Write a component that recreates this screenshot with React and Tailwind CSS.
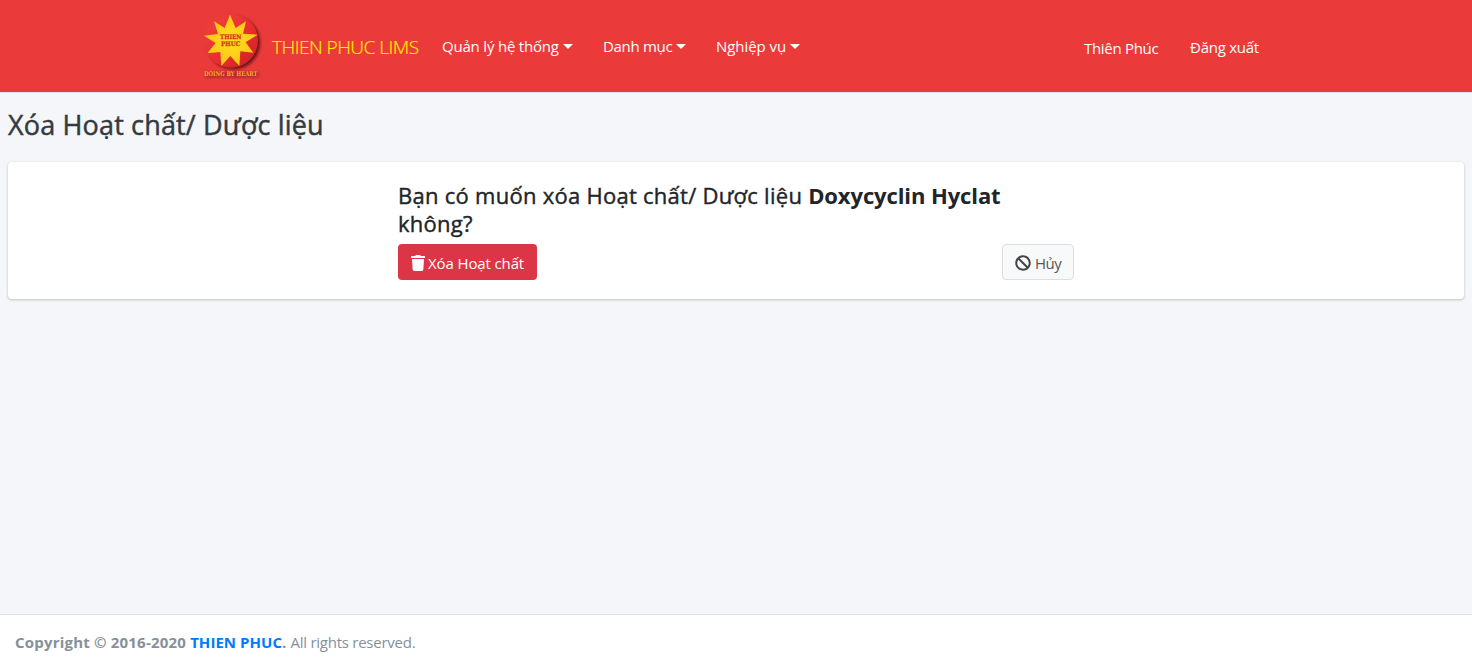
import React from "react";
import { FaTrash, FaBan } from "react-icons/fa";

const starPoints =
  "120,44 137,84 168,64 159,101 203,104 167,127 190,158 151,154 148,198 121,168 94,198 91,156 52,160 77,129 42,107 84,102 72,64 104,84";

function Logo() {
  return (
    <svg className="h-[92px] w-[90px] shrink-0" viewBox="0 0 270 276">
      <defs>
        <linearGradient id="disc" x1="0" y1="0" x2="1" y2="1">
          <stop offset="0.1" stopColor="#ee403d" />
          <stop offset="0.6" stopColor="#e62d2e" />
          <stop offset="1" stopColor="#c81e22" />
        </linearGradient>
        <radialGradient id="star">
          <stop offset="0" stopColor="#ffe01a" />
          <stop offset="1" stopColor="#fcc419" />
        </radialGradient>
        <filter id="soft" x="-20%" y="-20%" width="140%" height="140%">
          <feGaussianBlur stdDeviation="4" />
        </filter>
      </defs>
      <circle cx="130" cy="128" r="80" fill="#4a0c10" opacity="0.85" filter="url(#soft)" />
      <circle cx="123" cy="122" r="81" fill="url(#disc)" />
      <polygon points={starPoints} fill="url(#star)" />
      <rect x="46" y="216" width="160" height="16" fill="#5c0f10" opacity="0.4" filter="url(#soft)" />
      <g fontFamily="'DejaVu Serif', serif" fontWeight="bold" textAnchor="middle">
        <text x="122" y="116" fontSize="19" fill="#d8321e" stroke="#d8321e" strokeWidth="0.8" textLength="64" lengthAdjust="spacingAndGlyphs">THIEN</text>
        <text x="122" y="139" fontSize="19" fill="#d8321e" stroke="#d8321e" strokeWidth="0.8" textLength="58" lengthAdjust="spacingAndGlyphs">PHUC</text>
        <text x="122" y="227" fontSize="20" fill="#f9ad27" textLength="160" lengthAdjust="spacingAndGlyphs">DOING BY HEART</text>
      </g>
    </svg>
  );
}

function MenuItem({ className, children }) {
  return (
    <a href="#" className={`flex items-center whitespace-nowrap ${className}`}>
      {children}
      <span className="ml-1 h-0 w-0 border-x-[5px] border-t-[5px] border-x-transparent border-t-white" />
    </a>
  );
}

export default function App() {
  return (
    <div className="flex h-[668px] flex-col bg-[#f4f6f9] font-['Open_Sans','Noto_Sans',sans-serif] text-base leading-6 text-[#212529]">
      <header className="flex h-[93px] shrink-0 items-center border-b border-[#dee2e6] bg-[#eb3a3a] pl-[190px] text-[15px] text-white">
        <Logo />
        <a href="#" className="-ml-2 w-[170px] whitespace-nowrap pt-px text-[19px] font-light tracking-[-0.5px] text-[#ffee00] [-webkit-text-stroke:0.2px_#ffee00]">
          THIEN PHUC LIMS
        </a>
        <nav className="flex items-center">
          <MenuItem className="w-[161px] tracking-[-0.2px]">Quản lý hệ thống</MenuItem>
          <MenuItem className="w-[113px] tracking-[-0.3px]">Danh mục</MenuItem>
          <MenuItem className="tracking-[-0.05px]">Nghiệp vụ</MenuItem>
        </nav>
        <div className="ml-auto flex pr-[212px]">
          <span className="w-[106px] pt-[4px] tracking-[-0.3px]">Thiên Phúc</span>
          <a href="#" className="w-[70px] whitespace-nowrap pt-[3px] tracking-[-0.25px]">Đăng xuất</a>
        </div>
      </header>

      <main className="flex-1 px-2 pt-[14px]">
        <h1 className="h-[55px] whitespace-nowrap text-[27px] leading-[35px] tracking-[0.16px] text-[#343a40] [-webkit-text-stroke:0.45px_#343a40]">
          Xóa Hoạt chất/ Dược liệu
        </h1>
        <section className="h-[137px] rounded bg-white pl-[390px] pt-[19px] shadow-[0_0_1px_rgba(0,0,0,0.125),0_1px_3px_rgba(0,0,0,0.2)]">
          <div className="w-[676px]">
            <h2 className="whitespace-nowrap text-[22px] leading-[28px] tracking-[0.27px] [-webkit-text-stroke:0.4px_#212529]">
              Bạn có muốn xóa Hoạt chất/ Dược liệu{" "}
              <b className="tracking-[-0.1px] [-webkit-text-stroke:0]">Doxycyclin Hyclat</b>
              <br />
              không?
            </h2>
            <div className="mt-[7px] flex justify-between">
              <button className="flex h-9 w-[139px] items-center gap-[3px] whitespace-nowrap rounded bg-[#dc3545] pl-[13px] text-[15px] tracking-[-0.12px] text-white">
                <FaTrash className="mt-[2px] h-4 w-[14px]" />
                <span className="pt-[2px]">Xóa Hoạt chất</span>
              </button>
              <button className="flex h-9 w-[72px] items-center gap-1 whitespace-nowrap rounded border border-[#dddddd] bg-[#f8f9fa] pl-3 text-[15px] tracking-[-0.5px] text-[#444444]">
                <FaBan className="mt-[2px] h-4 w-4" />
                <span className="pt-[2px] text-[#555555]">Hủy</span>
              </button>
            </div>
          </div>
        </section>
      </main>

      <footer className="h-[54px] shrink-0 whitespace-nowrap border-t border-[#dee2e6] bg-white pl-[15px] pt-[15px] text-[15px] text-[#869099]">
        <strong className="tracking-[0.2px]">
          Copyright © 2016-2020 <a href="#" className="tracking-[0.05px] text-[#007bff]">THIEN PHUC</a>.
        </strong>{" "}
        <span className="tracking-[-0.25px]">All rights reserved.</span>
      </footer>
    </div>
  );
}
